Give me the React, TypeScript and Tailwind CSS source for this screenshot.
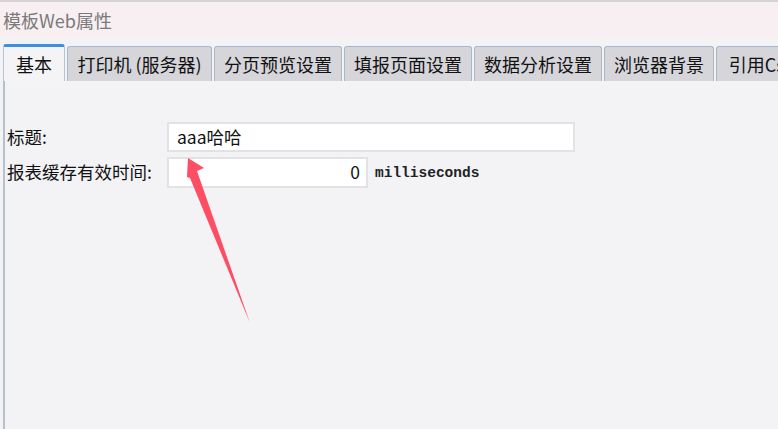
import React from "react"

const tabs = [
  { label: "基本", w: "w-[62px]" },
  { label: "打印机 (服务器)", w: "w-[145px]" },
  { label: "分页预览设置", w: "w-[128px]" },
  { label: "填报页面设置", w: "w-[128px]" },
  { label: "数据分析设置", w: "w-[128px]" },
  { label: "浏览器背景", w: "w-[110px]" },
  { label: "引用Css", w: "w-[90px]" },
]

const cjk = "font-['Noto_Sans_CJK_SC','Microsoft_YaHei',sans-serif]"

const App: React.FC = () => {
  return (
    <div className={`relative w-[778px] h-[429px] overflow-hidden bg-[#f3f3f6] ${cjk}`}>
      <div className="h-[2px] bg-[#d6d3d5]" />
      <div className="h-[36px] bg-[#f8eff2] flex items-center pl-[3px] text-[18px] text-[#7a7a7a]">
        模板Web属性
      </div>
      <div className="ml-[3px] h-[391px] flex flex-col">
        <div className="flex items-end gap-[2px] pt-[6px] h-[43px] shrink-0">
          {tabs.map((t, i) =>
            i === 0 ? (
              <div
                key={t.label}
                className={`${t.w} h-[37px] shrink-0 rounded-t-[3px] border-t-[3px] border-t-[#3d8fe0] border-x border-x-[#b7c3d2] bg-[#f4f4f7] flex items-center justify-center text-[18px] text-[#111]`}
              >
                {t.label}
              </div>
            ) : (
              <div
                key={t.label}
                className={`${t.w} h-[35px] shrink-0 rounded-t-[3px] border border-b-0 border-[#a9b7c9] bg-[#d5d5da] flex items-center justify-center text-[18px] text-[#111] whitespace-nowrap overflow-hidden`}
              >
                {t.label}
              </div>
            )
          )}
        </div>
        <div className="flex-1 border-l-2 border-[#b5c1d1] pl-[2px] pt-[41px]">
          <div className="flex items-center h-[30px]">
            <span className="w-[160px] text-[17.5px] text-[#111]">标题:</span>
            <div className="w-[408px] h-[30px] bg-white border-2 border-[#e2e2e4] flex items-center px-[8px] text-[17.5px] text-[#111]">
              aaa哈哈
            </div>
          </div>
          <div className="flex items-center h-[31px] mt-[5px]">
            <span className="w-[160px] text-[17.5px] text-[#111] whitespace-nowrap">报表缓存有效时间:</span>
            <div className="w-[201px] h-[31px] bg-white border-2 border-[#e2e2e4] flex items-center justify-end px-[6px] text-[17.5px] text-[#111]">
              0
            </div>
            <span className="ml-[7px] mt-[2px] font-['Liberation_Mono',monospace] font-bold text-[14.5px] text-[#222]">
              milliseconds
            </span>
          </div>
        </div>
      </div>
      <svg className="absolute left-0 top-0 pointer-events-none" width="778" height="429">
        <polygon
          points="188,158 204,168 197,171 250,323 190,178 187,177"
          fill="#ff4d63"
        />
      </svg>
    </div>
  )
}

export default App
